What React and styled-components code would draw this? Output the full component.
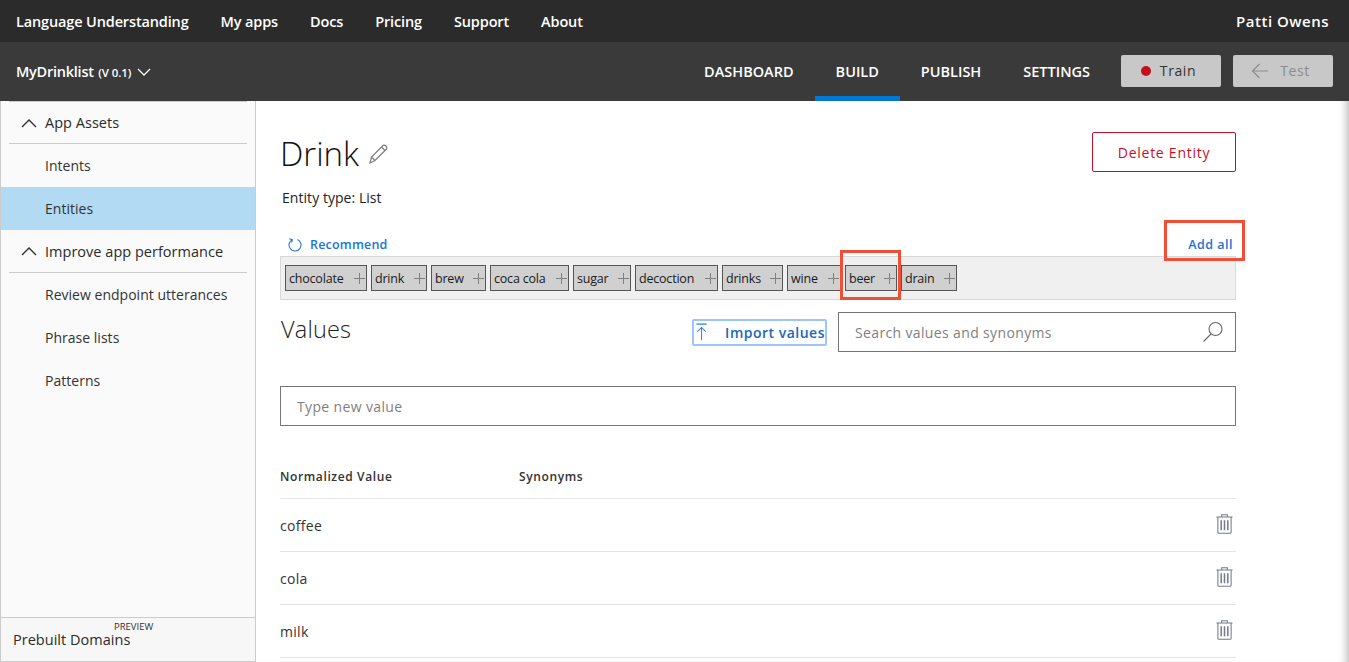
import React from "react";
import styled, { createGlobalStyle } from "styled-components";

const GlobalStyle = createGlobalStyle`
  html, body { margin: 0; padding: 0; height: 100%; overflow: hidden; }
  body { font-family: "Open Sans", "Noto Sans", "Liberation Sans", sans-serif; color: #212121; background: #fff; }
  * { box-sizing: border-box; }
`;

const Page = styled.div`
  width: 1349px;
  height: 662px;
  display: flex;
  flex-direction: column;
  overflow: hidden;
`;

const TopBar = styled.header`
  height: 42px;
  flex: none;
  background: #2b2b2b;
  color: #fff;
  display: flex;
  align-items: center;
  gap: 32px;
  padding: 0 20px 0 16px;
  font-size: 14.5px;
  font-weight: 600;
  letter-spacing: -0.14px;
`;

const UserName = styled.span`
  margin-left: auto;
  font-size: 15px;
  letter-spacing: 0.5px;
`;

const AppBar = styled.div`
  height: 59px;
  flex: none;
  background: #3a3a3a;
  color: #fff;
  display: flex;
  align-items: stretch;
  padding: 0 16px;
`;

const AppName = styled.div`
  display: flex;
  align-items: center;
  gap: 6px;
  font-size: 14.5px;
  font-weight: 600;
  letter-spacing: -0.25px;
  margin-right: auto;
`;

const Version = styled.span`
  font-size: 11.5px;
  margin-left: 1px;
  letter-spacing: -0.1px;
`;

const Tab = styled.div`
  display: flex;
  align-items: center;
  padding: 5px 21px 0;
  font-size: 14.5px;
  font-weight: 600;
  letter-spacing: 0;
  border-bottom: 5px solid ${(p) => (p.$active ? "#0078d4" : "transparent")};
`;

const TopButton = styled.div`
  width: 100px;
  height: 32px;
  align-self: center;
  margin-left: ${(p) => p.$gap}px;
  margin-bottom: 2px;
  padding-right: 5px;
  border-radius: 2px;
  background: #c8c8c8;
  color: ${(p) => (p.$disabled ? "#8c8c8c" : "#333")};
  display: flex;
  align-items: center;
  justify-content: center;
  gap: ${(p) => (p.$disabled ? 11 : 9)}px;
  font-size: 14px;
  font-weight: 400;
  letter-spacing: 0.6px;
`;

const Dot = styled.span`
  width: 10px;
  height: 10px;
  border-radius: 50%;
  background: #c50f1f;
`;

const Body = styled.div`
  flex: 1;
  display: flex;
  min-height: 0;
`;

const Sidebar = styled.aside`
  width: 256px;
  flex: none;
  display: flex;
  flex-direction: column;
  background: #fafafa;
  border-left: 1px solid #ccc;
  border-right: 1px solid #ccc;
  border-bottom: 1px solid #ccc;
  font-size: 14px;
  letter-spacing: 0.02px;
  color: #333;
`;

const SideHead = styled.div`
  height: ${(p) => p.$h}px;
  margin: 0 8px;
  padding-left: 12px;
  display: flex;
  align-items: center;
  gap: 8px;
  border-top: ${(p) => (p.$top ? "1px solid #ccc" : "none")};
  border-bottom: 1px solid #ccc;
  font-size: 14.5px;
  color: #2b2b2b;
`;

const SideItem = styled.div`
  height: 43px;
  padding-left: 44px;
  display: flex;
  align-items: center;
  background: ${(p) => (p.$active ? "#b2daf2" : "transparent")};
`;

const Prebuilt = styled.div`
  position: relative;
  margin-top: auto;
  height: 44px;
  border-top: 1px solid #ccc;
  background: #f7f7f7;
  padding: 12px 0 0 12px;
  font-size: 14.5px;
  color: #2b2b2b;
`;

const PreviewTag = styled.span`
  position: absolute;
  top: 2px;
  left: 113px;
  font-size: 9.5px;
  letter-spacing: 0;
  color: #333;
`;

const Main = styled.main`
  flex: 1;
  padding: 31px 113px 0 24px;
  box-shadow: inset -9px 0 8px -7px #b5b5b5;
  overflow: hidden;
`;

const TitleRow = styled.div`
  display: flex;
  justify-content: space-between;
  align-items: flex-start;
  height: 40px;
`;

const TitleGroup = styled.div`
  display: flex;
  align-items: center;
  gap: 9px;
`;

const Title = styled.h1`
  margin: 0;
  font-size: 33px;
  line-height: 44px;
  font-weight: 300;
  color: #111;
`;

const DeleteButton = styled.div`
  width: 144px;
  height: 40px;
  border: 1px solid #c50f2a;
  border-radius: 2px;
  display: flex;
  align-items: center;
  justify-content: center;
  color: #c50f2a;
  font-size: 14px;
  letter-spacing: 0.75px;
`;

const EntityType = styled.div`
  margin: 16px 0 0 2px;
  height: 20px;
  line-height: 20px;
  font-size: 14px;
  letter-spacing: 0.05px;
  color: #222;
`;

const RecommendRow = styled.div`
  margin-top: 26px;
  height: 20px;
  padding: 0 3px 0 7px;
  display: flex;
  align-items: center;
  justify-content: space-between;
  font-size: 12.5px;
  font-weight: 600;
  letter-spacing: 0.2px;
  color: #1a73d9;
`;

const Recommend = styled.span`
  display: flex;
  align-items: center;
  gap: 8px;
`;

const AddAll = styled.span`
  position: relative;
  letter-spacing: 0.5px;
  &::after {
    content: "";
    position: absolute;
    top: -16px;
    bottom: -8px;
    left: -24px;
    right: -12px;
    border: 3px solid #f04e37;
    pointer-events: none;
  }
`;

const Tray = styled.div`
  height: 44px;
  margin-top: 2px;
  background: #f0f0f0;
  border: 1px solid #d8d8d8;
  display: flex;
  align-items: center;
  gap: 4px;
  padding-left: 4px;
`;

const Chip = styled.div`
  position: relative;
  width: ${(p) => p.$w}px;
  height: 26px;
  flex: none;
  background: #d0d0d0;
  border: 1px solid #555;
  display: flex;
  align-items: center;
  justify-content: space-between;
  padding: 0 1px 0 3px;
  font-size: 12.5px;
  letter-spacing: -0.2px;
  color: #1a1a1a;
  ${(p) =>
    p.$marked &&
    `&::after {
      content: "";
      position: absolute;
      inset: -16px -5px -10px -6px;
      border: 3px solid #f04e37;
      pointer-events: none;
    }`}
`;

const ValuesRow = styled.div`
  display: flex;
  align-items: center;
  margin-top: 12px;
  height: 40px;
`;

const ValuesTitle = styled.h2`
  margin: 0 auto 6px 1px;
  font-size: 23.5px;
  font-weight: 300;
  letter-spacing: 0.2px;
  color: #222;
`;

const ImportButton = styled.div`
  width: 135px;
  height: 27px;
  border: 2px solid #9cc5fb;
  border-radius: 2px;
  display: flex;
  align-items: center;
  padding-left: 2px;
  gap: 18px;
  font-size: 14px;
  font-weight: 600;
  letter-spacing: 0.5px;
  white-space: nowrap;
  color: #1967b8;
`;

const FieldBox = styled.div`
  height: 40px;
  border: 1px solid #767676;
  width: ${(p) => p.$w}px;
  margin: ${(p) => p.$m || 0};
  flex: none;
  display: flex;
  align-items: center;
  justify-content: space-between;
  padding: 0 11px 0 16px;
  font-size: 14px;
  letter-spacing: 0.36px;
  color: #7f7f7f;
`;

const ValueTable = styled.div`
  margin-top: 41px;
`;

const HeadRow = styled.div`
  display: grid;
  grid-template-columns: 239px 1fr;
  height: 32px;
  align-items: flex-start;
  font-size: 12px;
  font-weight: 600;
  letter-spacing: 0.62px;
  color: #333;
  border-bottom: 1px solid #e4e4e4;
  padding-top: 1px;
`;

const ValueRow = styled.div`
  height: 53px;
  display: flex;
  align-items: center;
  justify-content: space-between;
  padding-right: 3px;
  border-bottom: 1px solid #e4e4e4;
  font-size: 14px;
  letter-spacing: 0.3px;
  color: #333;
  svg {
    margin-bottom: 3px;
  }
`;

const Chevron = ({ up }) => (
  <svg width={up ? 16 : 14} height="10" viewBox={up ? "0 0 16 10" : "0 0 14 10"} fill="none" stroke="currentColor" strokeWidth="1.3">
    <path d={up ? "M1 9 L8 2 L15 9" : "M1 2 L7 8 L13 2"} />
  </svg>
);

const ArrowLeft = () => (
  <svg width="18" height="16" viewBox="0 0 18 16" fill="none" stroke="#8c8c8c" strokeWidth="1.2">
    <path d="M17 8 H1.5 M8.5 1 L1.5 8 L8.5 15" />
  </svg>
);

const Pencil = () => (
  <svg width="21" height="22" viewBox="0 0 21 22" fill="none" stroke="#7d7d7d" strokeWidth="1.2">
    <path d="M2 20 L3.5 14 L15 2.5 Q16.5 1.5 18 3 Q19.5 4.5 18.5 6 L7 17.5 Z M3.5 14 L7 17.5 M13.5 4 L17 7.5" />
  </svg>
);

const RefreshIcon = () => (
  <svg width="15" height="15" viewBox="0 0 15 15" fill="none" stroke="#2c74d8" strokeWidth="1.1">
    <path d="M4.6 2.2 A6 6 0 1 0 10 2 M1.8 1.2 L4.8 2.1 L4.2 5" transform="translate(0.5 0.5)" />
  </svg>
);

const UploadIcon = () => (
  <svg width="12" height="20" viewBox="0 0 12 20" fill="none" stroke="#3e7fd0" strokeWidth="1.1">
    <path d="M0.5 1.5 H11.5 M6 19 V5 M1.5 9.5 L6 5 L10.5 9.5" />
  </svg>
);

const SearchIcon = () => (
  <svg width="22" height="22" viewBox="0 0 22 22" fill="none" stroke="#666" strokeWidth="1.1">
    <circle cx="13.5" cy="8" r="6.5" />
    <path d="M9 13 L1.5 20.5" />
  </svg>
);

const TrashIcon = () => (
  <svg width="17" height="20" viewBox="0 0 18 21" fill="none" stroke="#75798a" strokeWidth="1.1">
    <path d="M0.5 3 H17.5 M6 3 V0.8 H12 V3 M2 3 V19.5 Q2 20.4 3 20.4 H15 Q16 20.4 16 19.5 V3" />
    <path d="M5.5 6.5 V17 M9 6.5 V17 M12.5 6.5 V17" strokeWidth="1.6" />
  </svg>
);

const PlusIcon = () => (
  <svg width="11" height="11" viewBox="0 0 11 11" stroke="#808080" strokeWidth="1" style={{ marginTop: 1 }}>
    <path d="M0 5.5 H11 M5.5 0 V11" />
  </svg>
);

const chips = [
  ["chocolate", 82],
  ["drink", 56],
  ["brew", 55],
  ["coca cola", 79],
  ["sugar", 58],
  ["decoction", 83],
  ["drinks", 61],
  ["wine", 54],
  ["beer", 52],
  ["drain", 56],
];

const values = ["coffee", "cola", "milk"];

export default function App() {
  return (
    <Page>
      <GlobalStyle />
      <TopBar>
        <span>Language Understanding</span>
        <span>My apps</span>
        <span>Docs</span>
        <span>Pricing</span>
        <span>Support</span>
        <span>About</span>
        <UserName>Patti Owens</UserName>
      </TopBar>
      <AppBar>
        <AppName>
          <span>
            MyDrinklist <Version>(V 0.1)</Version>
          </span>
          <Chevron />
        </AppName>
        <Tab>DASHBOARD</Tab>
        <Tab $active>BUILD</Tab>
        <Tab>PUBLISH</Tab>
        <Tab>SETTINGS</Tab>
        <TopButton $gap={10}>
          <Dot />
          Train
        </TopButton>
        <TopButton $gap={12} $disabled>
          <ArrowLeft />
          Test
        </TopButton>
      </AppBar>
      <Body>
        <Sidebar>
          <SideHead $h={43} $top>
            <Chevron up />
            App Assets
          </SideHead>
          <SideItem>Intents</SideItem>
          <SideItem $active>Entities</SideItem>
          <SideHead $h={43}>
            <Chevron up />
            Improve app performance
          </SideHead>
          <SideItem>Review endpoint utterances</SideItem>
          <SideItem>Phrase lists</SideItem>
          <SideItem>Patterns</SideItem>
          <Prebuilt>
            <PreviewTag>PREVIEW</PreviewTag>
            Prebuilt Domains
          </Prebuilt>
        </Sidebar>
        <Main>
          <TitleRow>
            <TitleGroup>
              <Title>Drink</Title>
              <Pencil />
            </TitleGroup>
            <DeleteButton>Delete Entity</DeleteButton>
          </TitleRow>
          <EntityType>Entity type: List</EntityType>
          <RecommendRow>
            <Recommend>
              <RefreshIcon />
              Recommend
            </Recommend>
            <AddAll>Add all</AddAll>
          </RecommendRow>
          <Tray>
            {chips.map(([label, width]) => (
              <Chip key={label} $w={width} $marked={label === "beer"}>
                {label}
                <PlusIcon />
              </Chip>
            ))}
          </Tray>
          <ValuesRow>
            <ValuesTitle>Values</ValuesTitle>
            <ImportButton>
              <UploadIcon />
              Import values
            </ImportButton>
            <FieldBox $w={398} $m="0 0 0 11px">
              Search values and synonyms
              <SearchIcon />
            </FieldBox>
          </ValuesRow>
          <FieldBox $w={956} $m="34px 0 0">
            Type new value
          </FieldBox>
          <ValueTable>
            <HeadRow>
              <span>Normalized Value</span>
              <span>Synonyms</span>
            </HeadRow>
            {values.map((value) => (
              <ValueRow key={value}>
                {value}
                <TrashIcon />
              </ValueRow>
            ))}
          </ValueTable>
        </Main>
      </Body>
    </Page>
  );
}
